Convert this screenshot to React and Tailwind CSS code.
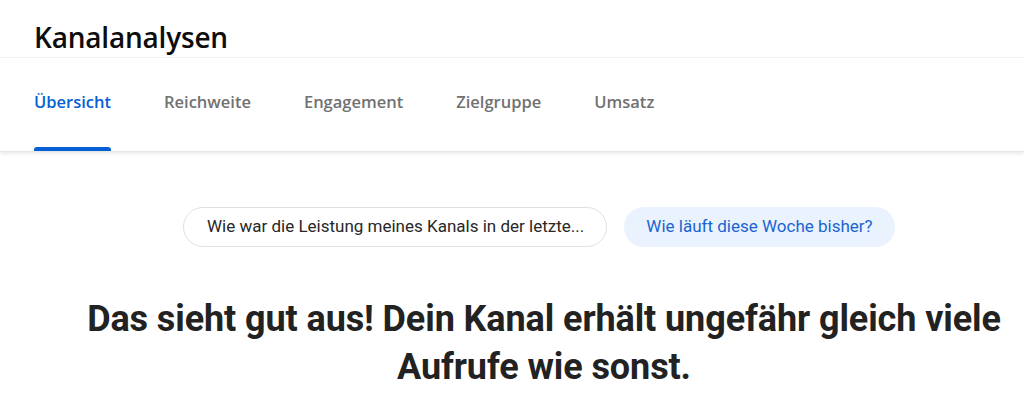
import React from 'react';

const tabs = ['Übersicht', 'Reichweite', 'Engagement', 'Zielgruppe', 'Umsatz'];

const App = () => {
    const active = 0;

    return (
        <div className="w-[1024px] h-[399px] overflow-hidden bg-white font-['Roboto',sans-serif]">
            {/* Header */}
            <div className="h-[58px] px-[34px] pt-[19px] border-b border-[#f2f2f2]">
                <h1 className="font-['Open_Sans',sans-serif] text-[28px] leading-9 font-semibold text-[#0d0d0d] tracking-[-0.2px]">Kanalanalysen</h1>
            </div>

            {/* Tabs */}
            <div className="relative h-[94px] px-[34px] flex gap-[53px] border-b border-[#e5e5e5] shadow-[0_2px_3px_rgba(0,0,0,0.08)]">
                {tabs.map((t, i) => (
                    <div key={t} className="relative flex items-center h-full pb-[5px]">
                        <span className={`font-['Open_Sans',sans-serif] text-[16.5px] font-semibold ${i === active ? 'text-[#065fd4]' : 'text-[#717171]'}`}>{t}</span>
                        {i === active && (
                            <div className="absolute left-0 right-0 bottom-0 h-1 bg-[#065fd4] rounded-t-[3px]"></div>
                        )}
                    </div>
                ))}
            </div>

            {/* Content */}
            <div className="pl-16 pt-[55px]">
                <div className="flex justify-center gap-[17px] pr-[10px]">
                    <button className="h-10 w-[424px] pl-[23px] rounded-full border border-[#e0e0e0] text-left text-[17px] text-[#282828] whitespace-nowrap">
                        Wie war die Leistung meines Kanals in der letzte...
                    </button>
                    <button className="h-10 w-[271px] rounded-full bg-[#eaf2fd] text-[17px] text-[#1a64d1]">
                        Wie läuft diese Woche bisher?
                    </button>
                </div>

                <h2 className="mt-[48px] text-center text-[36px] leading-[48px] font-bold text-[#222222] tracking-[-0.1px]">
                    Das sieht gut aus! Dein Kanal erhält ungefähr gleich viele<br />Aufrufe wie sonst.
                </h2>
            </div>
        </div>
    );
};

export default App;
